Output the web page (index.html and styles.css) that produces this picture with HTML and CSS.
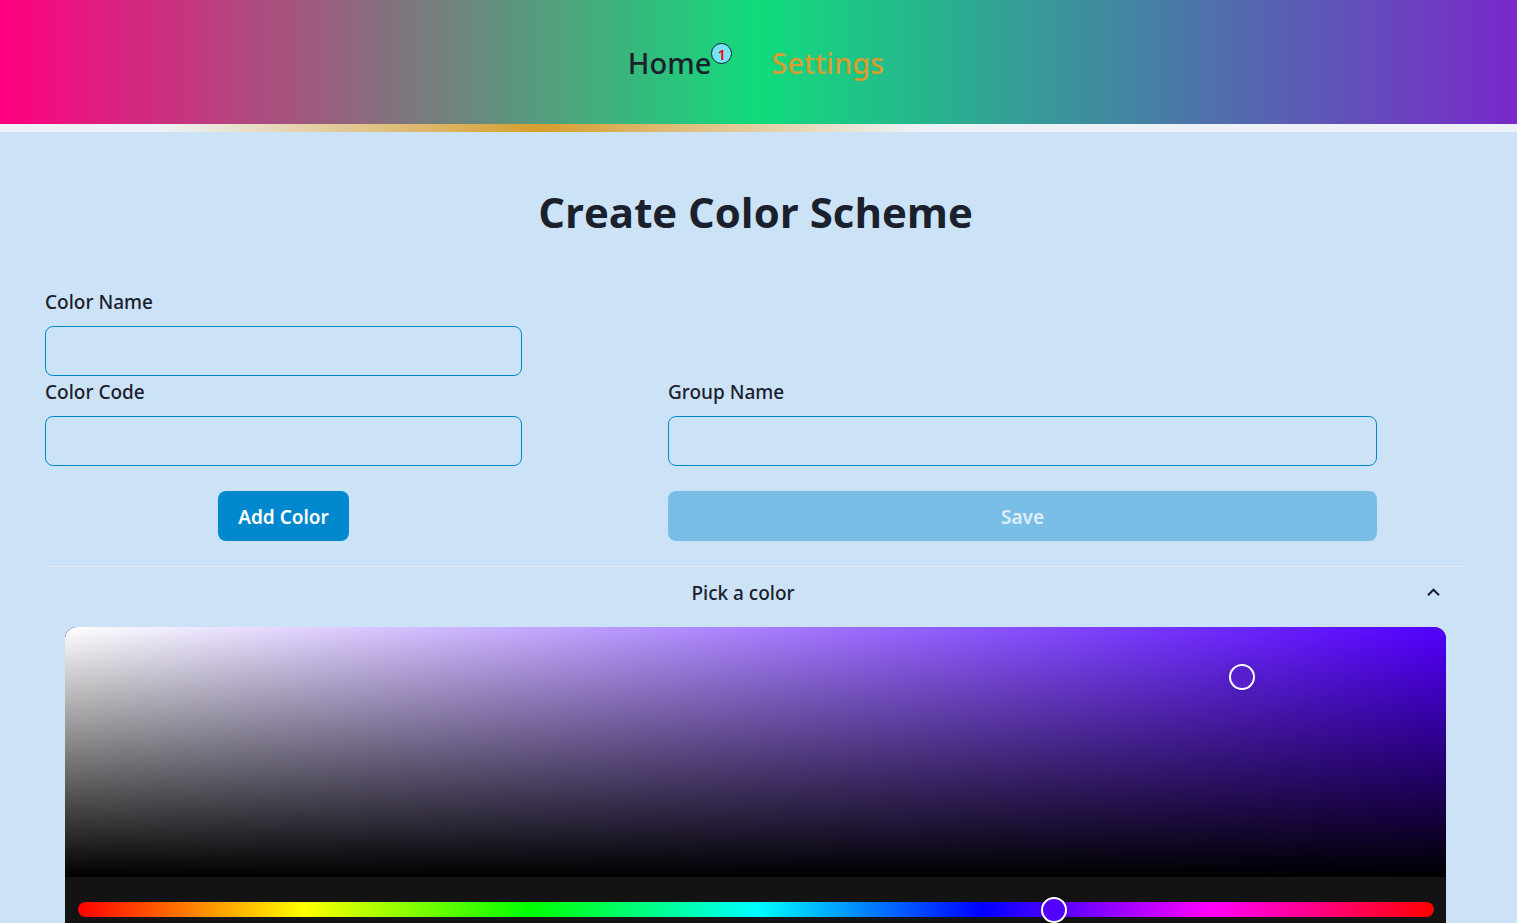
FILE: index.html
```html
<!DOCTYPE html>
<html lang="en">
<head>
<meta charset="utf-8">
<title>Create Color Scheme</title>
<link rel="stylesheet" href="styles.css">
</head>
<body>
<header class="navbar">
  <nav class="nav-links">
    <a class="nav-link" href="#home">Home<span class="badge">1</span></a>
    <a class="nav-link active" href="#settings">Settings</a>
  </nav>
</header>
<div class="progress"><div class="progress-bar"></div></div>
<main class="page">
  <h1 class="title">Create Color Scheme</h1>
  <form class="scheme-form">
    <div class="color-fields">
      <label class="label" for="color-name">Color Name</label>
      <input class="input" id="color-name" type="text">
      <label class="label" for="color-code">Color Code</label>
      <input class="input" id="color-code" type="text">
      <button class="button add" type="button">Add Color</button>
    </div>
    <div class="group-fields">
      <label class="label" for="group-name">Group Name</label>
      <input class="input" id="group-name" type="text">
      <button class="button save" type="submit" disabled>Save</button>
    </div>
  </form>
  <section class="accordion">
    <button class="accordion-toggle" type="button" aria-expanded="true">
      <span class="accordion-text">Pick a color</span>
      <svg class="chevron" viewBox="0 0 24 24" aria-hidden="true"><path d="M12 7l-6 6 1.41 1.41L12 9.83l4.59 4.58L18 13z"/></svg>
    </button>
    <div class="picker">
      <div class="saturation"><div class="cursor saturation-cursor"></div></div>
      <div class="picker-body">
        <div class="hue"><div class="cursor hue-cursor"></div></div>
      </div>
    </div>
  </section>
</main>
</body>
</html>
```
FILE: styles.css
```css
* { box-sizing: border-box; }

body {
  margin: 0;
  height: 100vh;
  overflow: hidden;
  background: #cce3f7;
  color: #1a202c;
  font: 500 19px/30px "Segoe UI", "Noto Sans", "Open Sans", sans-serif;
}

.navbar {
  display: flex;
  justify-content: center;
  align-items: center;
  height: 124px;
  padding: 2px 5px 0 0;
  background: linear-gradient(to right, #ff0080, #10dc7c 50%, #7928ca);
}

.nav-links {
  display: flex;
  gap: 60px;
}

.nav-link {
  position: relative;
  color: inherit;
  font-size: 29px;
  line-height: 44px;
  text-decoration: none;
}

.nav-link.active { color: #d69e2e; }

.badge {
  position: absolute;
  top: 2px;
  left: 100%;
  width: 21px;
  height: 21px;
  border: 1px solid #1a202c;
  border-radius: 50%;
  background: #76e4f7;
  color: #f00;
  font-size: 15px;
  font-weight: 600;
  line-height: 20px;
  text-align: center;
}

.progress {
  height: 8px;
  background: #edf2f7;
}

.progress-bar {
  width: 50%;
  height: 100%;
  margin-left: 10.5%;
  background: linear-gradient(to right, transparent, #d69e2e, transparent);
}

.page { padding: 50px 51px 0 45px; }

.title {
  margin: 0;
  font-family: "Segoe UI", "Open Sans", sans-serif;
  font-size: 42px;
  font-weight: 700;
  line-height: 60px;
  text-align: center;
}

.scheme-form {
  display: grid;
  grid-template-columns: 477fr 146fr 709fr 89fr;
  align-items: end;
  padding: 45px 0 25px;
}

.color-fields,
.group-fields {
  display: flex;
  flex-direction: column;
}

.group-fields { grid-column: 3; }

.label { padding-bottom: 9px; }

.input {
  width: 100%;
  height: 50px;
  padding: 0 20px;
  border: 1px solid #0088cc;
  border-radius: 8px;
  background: transparent;
  color: inherit;
  font: inherit;
}

.input + .label { padding-top: 1px; }

.button {
  height: 50px;
  margin-top: 25px;
  padding: 2px 20px 0;
  border: 0;
  border-radius: 8px;
  background: #0088cf;
  color: #fff;
  font: inherit;
  font-weight: 600;
}

.add { align-self: center; }
.save { opacity: 0.4; }

.accordion { border-top: 1px solid #e2e8f0; }

.accordion-toggle {
  display: flex;
  align-items: center;
  width: 100%;
  height: 50px;
  padding: 2px 20px 0;
  border: 0;
  background: transparent;
  color: inherit;
  font: inherit;
}

.accordion-text { flex: 1; }

.chevron {
  width: 25px;
  height: 25px;
  fill: currentColor;
}

.picker {
  margin: 10px 20px 0;
  border-radius: 12px;
  overflow: hidden;
  background: #131313;
}

.saturation {
  position: relative;
  height: 250px;
  background:
    linear-gradient(to top, #000, transparent),
    linear-gradient(to right, #fff, transparent),
    #5200ff;
}

.picker-body { padding: 25px 12px 25px 13px; }

.hue {
  position: relative;
  height: 15px;
  border-radius: 8px;
  background: linear-gradient(to right, #f00, #ff0, #0f0, #0ff, #00f, #f0f, #f00);
}

.cursor {
  position: absolute;
  width: 26px;
  height: 26px;
  border: 2px solid #fff;
  border-radius: 50%;
  transform: translate(-50%, -50%);
  box-shadow: 0 0 10px rgba(0, 0, 0, 0.15);
}

.saturation-cursor {
  left: 85.2%;
  top: 20%;
  background: #561ecc;
}

.hue-cursor {
  left: 72%;
  top: 50%;
  background: #5200ff;
}
```
